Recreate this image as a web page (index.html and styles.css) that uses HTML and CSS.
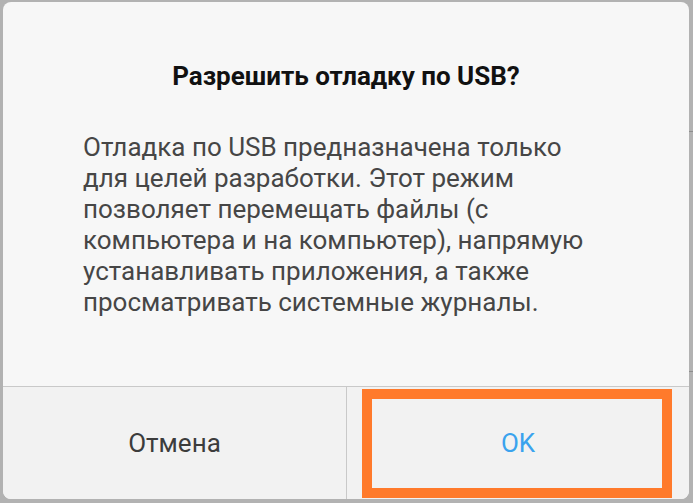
FILE: index.html
```html
<!DOCTYPE html>
<html lang="ru">
<head>
    <meta charset="UTF-8">
    <meta name="viewport" content="width=device-width, initial-scale=1.0">
    <title>Отладка по USB</title>
    <link rel="stylesheet" href="styles.css">
</head>
<body>
    <div class="dialog">
        <div class="content">
            <h1>Разрешить отладку по USB?</h1>
            <p>Отладка по USB предназначена только<br>для целей разработки. Этот режим<br>позволяет перемещать файлы (с<br>компьютера и на компьютер), напрямую<br>устанавливать приложения, а также<br>просматривать системные журналы.</p>
        </div>
        <div class="actions">
            <button class="btn">Отмена</button>
            <button class="btn btn-ok">OK<span class="highlight"></span></button>
        </div>
    </div>
</body>
</html>
```

FILE: styles.css
```css
html, body {
    margin: 0;
    height: 100%;
}
body {
    font-family: Roboto, "Noto Sans", sans-serif;
    background:
        linear-gradient(#8e8e8e, #8e8e8e) right 0 top 131px / 4px 1px no-repeat,
        linear-gradient(#8e8e8e, #8e8e8e) right 0 top 371px / 4px 1px no-repeat,
        #b2b2b2;
    padding: 2px 4px 4px 3px;
    box-sizing: border-box;
}
.dialog {
    height: 100%;
    background-color: #f7f7f7;
    border-radius: 8px;
    overflow: hidden;
    display: flex;
    flex-direction: column;
}
.content {
    flex: 1;
    padding: 59px 0 0 80px;
}
h1 {
    margin: 0 0 0 -80px;
    font-size: 26px;
    line-height: 30px;
    font-weight: bold;
    color: #111;
    text-align: center;
}
p {
    margin: 41px 0 0;
    font-size: 26px;
    line-height: 31px;
    color: #464646;
    white-space: nowrap;
}
.actions {
    height: 112px;
    border-top: 1px solid #c9c9c9;
    background-color: #f2f2f2;
    display: grid;
    grid-template-columns: 1fr 1fr;
}
.btn {
    position: relative;
    border: none;
    background: none;
    font-family: Roboto, "Noto Sans", sans-serif;
    font-size: 26px;
    color: #3c3c3c;
    padding: 0;
}
.btn-ok {
    color: #3aa3ee;
    border-left: 1px solid #c9c9c9;
}
.highlight {
    position: absolute;
    left: 15px;
    right: 17px;
    top: 2px;
    bottom: 1px;
    border: 10px solid #ff7a2b;
}
```
